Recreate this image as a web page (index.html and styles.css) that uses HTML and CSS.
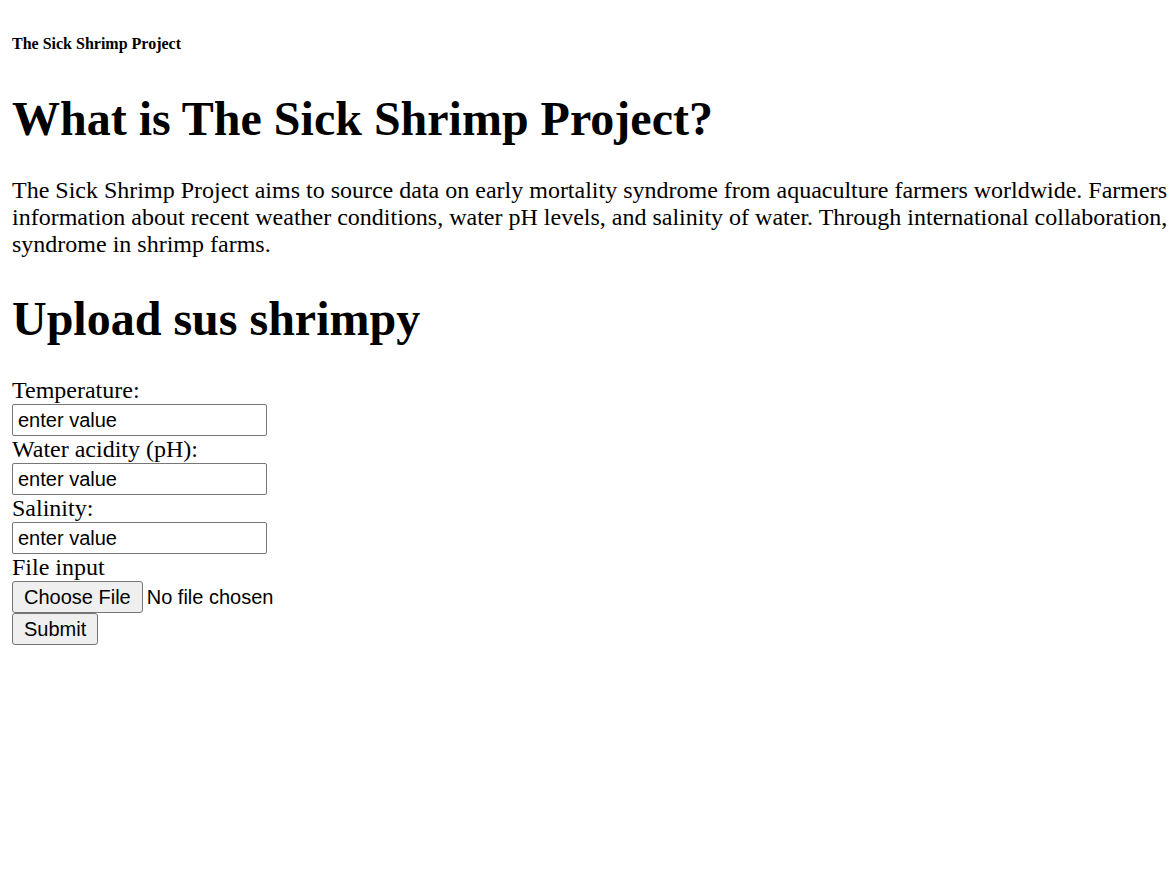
FILE: index.html
```html
<!DOCTYPE html>
<html lang="en">
<head>
<meta charset="utf-8">
<title>The Sick Shrimp Project</title>
<link rel="stylesheet" href="styles.css">
</head>
<body>
<header class="site-header">
  <h6 class="brand">The Sick Shrimp Project</h6>
</header>
<main>
  <section class="about">
    <h1 class="title">What is The Sick Shrimp Project?</h1>
    <p class="intro">The Sick Shrimp Project aims to source data on early mortality syndrome from aquaculture farmers worldwide. Farmers<br>information about recent weather conditions, water pH levels, and salinity of water. Through international collaboration,<br>syndrome in shrimp farms.</p>
  </section>
  <section class="upload">
    <h1 class="title">Upload sus shrimpy</h1>
    <form class="upload-form">
      <label class="field-label" for="temp">Temperature:</label>
      <input class="text-input" id="temp" type="text" value="enter value">
      <label class="field-label" for="ph">Water acidity (pH):</label>
      <input class="text-input" id="ph" type="text" value="enter value">
      <label class="field-label" for="sal">Salinity:</label>
      <input class="text-input" id="sal" type="text" value="enter value">
      <label class="field-label" for="file">File input</label>
      <div class="file-row">
        <button type="button" class="btn">Choose File</button>
        <span class="file-status">No file chosen</span>
      </div>
      <div class="submit-row">
        <button type="submit" class="btn">Submit</button>
      </div>
    </form>
  </section>
</main>
</body>
</html>
```

FILE: styles.css
```css
html {
  overflow: hidden;
}
body {
  margin: 0;
  padding: 0 12px;
  font-family: "Liberation Serif", "Times New Roman", serif;
  font-size: 24px;
  color: #000;
  background: #fff;
}
.site-header {
  padding-top: 35px;
}
.brand {
  margin: 0;
  font-size: 16px;
  line-height: 18px;
  font-weight: bold;
}
.title {
  margin: 38px 0 31px;
  font-size: 48px;
  line-height: 55px;
  font-weight: bold;
}
.about .title {
  margin-top: 38px;
}
.upload .title {
  margin-top: 33px;
}
.intro {
  margin: 0;
  line-height: 27px;
  white-space: nowrap;
}
.upload-form {
  display: flex;
  flex-direction: column;
  align-items: flex-start;
}
.field-label {
  display: block;
  line-height: 27px;
}
.text-input {
  box-sizing: border-box;
  width: 255px;
  height: 32px;
  margin: 0;
  padding: 1px 5px;
  border: 1px solid #767676;
  border-radius: 2px;
  font-family: "Liberation Sans", Arial, sans-serif;
  font-size: 20px;
  color: #000;
  background: #fff;
}
.file-row {
  display: flex;
  align-items: center;
  height: 32px;
}
.submit-row {
  display: flex;
  height: 32px;
}
.btn {
  box-sizing: border-box;
  height: 32px;
  margin: 0;
  padding: 1px 11px;
  border: 1px solid #767676;
  border-radius: 3px;
  background: #efefef;
  font-family: "Liberation Sans", Arial, sans-serif;
  font-size: 20px;
  color: #000;
}
.file-status {
  margin-left: 4px;
  font-family: "Liberation Sans", Arial, sans-serif;
  font-size: 20px;
}
```
